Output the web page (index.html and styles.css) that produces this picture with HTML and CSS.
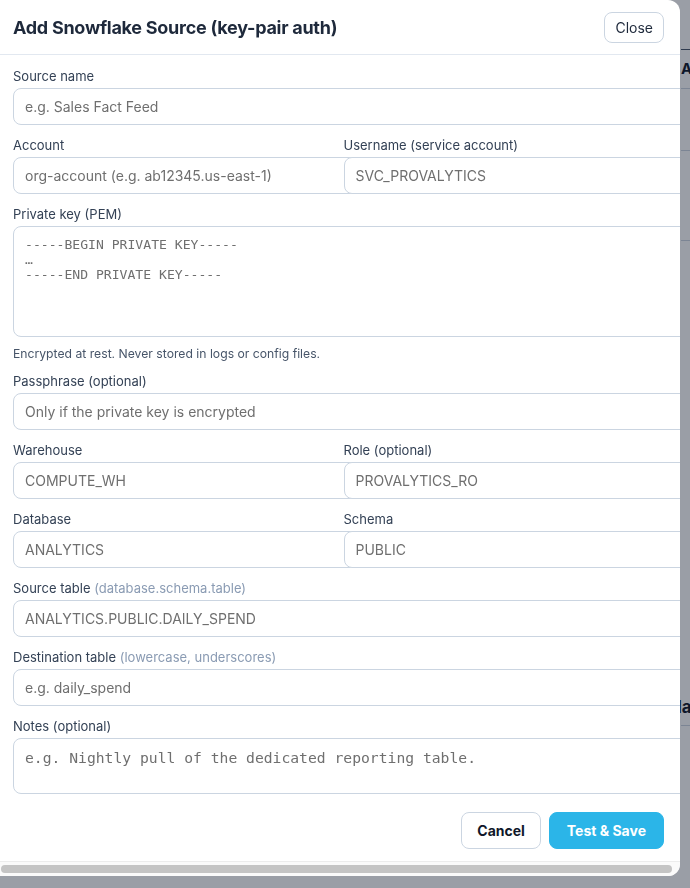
FILE: index.html
```html
<!DOCTYPE html>
<html lang="en">
<head>
  <meta charset="UTF-8" />
  <meta name="viewport" content="width=device-width, initial-scale=1.0"/>
  <title>Sources</title>
  <link rel="stylesheet" href="styles.css">
</head>
<body>
  <!-- page behind the dialog -->
  <main class="page">
    <div class="page-row page-head">Account</div>
    <div class="page-row page-row-mid"></div>
    <div class="page-row page-row-tall"></div>
    <div class="page-row page-row-mid"></div>
    <h2 class="page-sub">Mappings</h2>
    <div class="page-row page-row-thin"></div>
  </main>

  <div class="overlay">
    <div class="modal">
      <header class="modal-head">
        <h1>Add Snowflake Source (key-pair auth)</h1>
        <button class="btn btn-small">Close</button>
      </header>

      <form class="modal-body">
        <div class="field">
          <label>Source name</label>
          <input type="text" placeholder="e.g. Sales Fact Feed">
        </div>

        <div class="row">
          <div class="field">
            <label>Account</label>
            <input type="text" placeholder="org-account (e.g. ab12345.us-east-1)">
          </div>
          <div class="field">
            <label>Username (service account)</label>
            <input type="text" placeholder="SVC_PROVALYTICS">
          </div>
        </div>

        <div class="field">
          <label>Private key (PEM)</label>
          <textarea class="pem" placeholder="-----BEGIN PRIVATE KEY-----&#10;…&#10;-----END PRIVATE KEY-----"></textarea>
          <p class="help">Encrypted at rest. Never stored in logs or config files.</p>
        </div>

        <div class="field">
          <label>Passphrase (optional)</label>
          <input type="password" placeholder="Only if the private key is encrypted">
        </div>

        <div class="row">
          <div class="field">
            <label>Warehouse</label>
            <input type="text" placeholder="COMPUTE_WH">
          </div>
          <div class="field">
            <label>Role (optional)</label>
            <input type="text" placeholder="PROVALYTICS_RO">
          </div>
        </div>

        <div class="row">
          <div class="field">
            <label>Database</label>
            <input type="text" placeholder="ANALYTICS">
          </div>
          <div class="field">
            <label>Schema</label>
            <input type="text" placeholder="PUBLIC">
          </div>
        </div>

        <div class="field">
          <label>Source table <span class="hint">(database.schema.table)</span></label>
          <input type="text" placeholder="ANALYTICS.PUBLIC.DAILY_SPEND">
        </div>

        <div class="field">
          <label>Destination table <span class="hint">(lowercase, underscores)</span></label>
          <input type="text" placeholder="e.g. daily_spend">
        </div>

        <div class="field">
          <label>Notes (optional)</label>
          <textarea class="notes" placeholder="e.g. Nightly pull of the dedicated reporting table."></textarea>
        </div>

        <div class="modal-foot">
          <button type="button" class="btn">Cancel</button>
          <button type="button" class="btn btn-primary">Test &amp; Save</button>
        </div>
      </form>

      <!-- horizontal scroll track for the overflowing form -->
      <div class="hscroll"><div class="hscroll-thumb"></div></div>
    </div>
  </div>
</body>
</html>
```

FILE: styles.css
```css
/* General */
body {
  margin: 0;
  font-family: Inter, "Noto Sans", sans-serif;
  color: #1e293b;
  background: #fff;
  overflow: hidden;
}

/* Page under the dialog */
.page {
  padding: 49px 0 0 681px;
  white-space: nowrap;
}

.page-row {
  height: 38px;
  border-top: 1px solid #cbd5e1;
}

.page-head {
  border-top-color: #475569;
  font-size: 15px;
  font-weight: 700;
  line-height: 38px;
  color: #0f172a;
}

.page-row-tall {
  height: 89px;
}

.page-row-mid {
  height: 61px;
}

.page-sub {
  margin: 393px 0 0 -15px;
  font-size: 17px;
  line-height: 24px;
  color: #0f172a;
}

.page-row-thin {
  margin-top: 6px;
  height: 40px;
}

/* Overlay + dialog */
.overlay {
  position: fixed;
  inset: 0;
  background: rgba(15, 23, 42, 0.42);
  display: flex;
  align-items: flex-start;
}

.modal {
  margin-left: -12px;
  width: 692px;
  background: #fff;
  border-radius: 12px;
  overflow: hidden;
}

.modal-head {
  display: flex;
  align-items: center;
  justify-content: space-between;
  height: 54px;
  padding: 0 16px 0 25px;
  border-bottom: 1px solid #e2e8f0;
}

.modal-head h1 {
  margin: 0;
  font-size: 18px;
  font-weight: 700;
  letter-spacing: -0.27px;
  color: #1e293b;
}

.modal-body {
  padding: 13px 16px 12px 25px;
}

/* Fields */
.field {
  margin-bottom: 12px;
}

.field label {
  display: block;
  font-size: 13px;
  line-height: 16px;
  color: #334155;
  margin-bottom: 4px;
}

.hint {
  color: #8a9bb3;
}

.row {
  display: grid;
  grid-template-columns: 1fr 1fr;
  gap: 10px;
}

input,
textarea {
  display: block;
  box-sizing: content-box;
  width: 100%;
  margin: 0;
  padding: 9px 11px;
  border: 1px solid #cbd5e1;
  border-radius: 8px;
  background: #fff;
  font-family: inherit;
  font-size: 14px;
  line-height: 17px;
  height: 17px;
  color: #1e293b;
}

input::placeholder,
textarea::placeholder {
  color: #6f6f6f;
  opacity: 1;
}

textarea {
  resize: none;
}

.pem {
  height: 90px;
  padding-top: 10px;
  font-family: "DejaVu Sans Mono", monospace;
  font-size: 13.1px;
  line-height: 15px;
}

.notes {
  height: 35px;
  padding-top: 10px;
  font-family: "DejaVu Sans Mono", monospace;
  font-size: 14.7px;
  line-height: 18px;
}

.help {
  margin: 9px 0 0;
  font-size: 12.2px;
  line-height: 15px;
  color: #475569;
}

/* Buttons */
.btn {
  font-family: inherit;
  font-size: 14px;
  font-weight: 700;
  color: #0f172a;
  background: #fff;
  border: 1px solid #cbd5e1;
  border-radius: 8px;
  height: 37px;
  padding: 0 15px;
  cursor: pointer;
}

.btn-small {
  height: 31px;
  padding: 0 10px;
  font-weight: 400;
  color: #1e293b;
}

.btn-primary {
  background: #2bb5e8;
  border-color: #2bb5e8;
  color: #fff;
  padding: 0 17px;
}

.modal-foot {
  display: flex;
  justify-content: flex-end;
  gap: 8px;
  padding-top: 6px;
}

/* Scroll track */
.hscroll {
  height: 15px;
  box-sizing: border-box;
  border-top: 1px solid #ececec;
  background: #fafafa;
  padding: 3px 8px 0 13px;
}

.hscroll-thumb {
  height: 8px;
  border-radius: 4px;
  background: #c4c4c4;
}
```
